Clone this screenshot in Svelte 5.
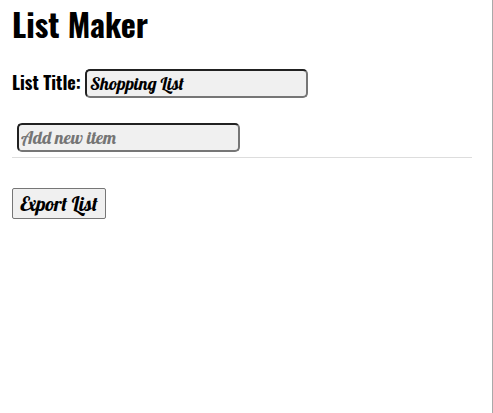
<script>
  let title = $state('Shopping List');
  let newItem = $state('');
</script>

<main>
  <h1>List Maker</h1>
  <div class="title-row">
    <label for="title">List Title:</label>
    <input id="title" class="title" bind:value={title} />
  </div>
  <div class="items">
    <input placeholder="Add new item" aria-label="Add new item" bind:value={newItem} />
  </div>
  <button type="button">Export List</button>
</main>

<style>
  :global(body) { margin: 0; background: #fff; }
  main {
    box-sizing: border-box;
    width: 493px;
    height: 413px;
    padding: 0 20px 0 12px;
    border-right: 1px solid #a9a9a9;
    color: #000;
    font-family: Oswald, Roboto, sans-serif;
  }
  h1 {
    margin: 0;
    height: 69px;
    box-sizing: border-box;
    font-size: 32px;
    line-height: 47px;
    font-weight: 700;
  }
  .title-row { display: flex; height: 29px; }
  label {
    width: 73px;
    font-size: 18px;
    line-height: 27px;
    font-weight: 700;
    white-space: nowrap;
  }
  input {
    box-sizing: border-box;
    width: 223px;
    height: 29px;
    margin: 0;
    padding: 1px 2px;
    border: 2px solid;
    border-color: #212121 #767676 #767676 #212121;
    border-radius: 5px;
    background: #f0f0f0;
    color: #000;
    outline: none;
    font: 400 18px Lobster, "Liberation Serif", serif;
  }
  .title { padding-left: 3px; }
  input::placeholder { color: #757575; opacity: 1; }
  .items {
    display: flex;
    box-sizing: border-box;
    width: 460px;
    height: 35px;
    margin-top: 25px;
    padding-left: 5px;
    border-bottom: 1px solid #ddd;
  }
  button {
    display: block;
    box-sizing: border-box;
    width: 94px;
    height: 31px;
    margin: 30px 0 0;
    padding: 1px 6px;
    border: 1px solid #767676;
    border-radius: 2px;
    background: #f0f0f0;
    color: #000;
    font: 400 20px Lobster, "Liberation Serif", serif;
    white-space: nowrap;
  }
</style>
